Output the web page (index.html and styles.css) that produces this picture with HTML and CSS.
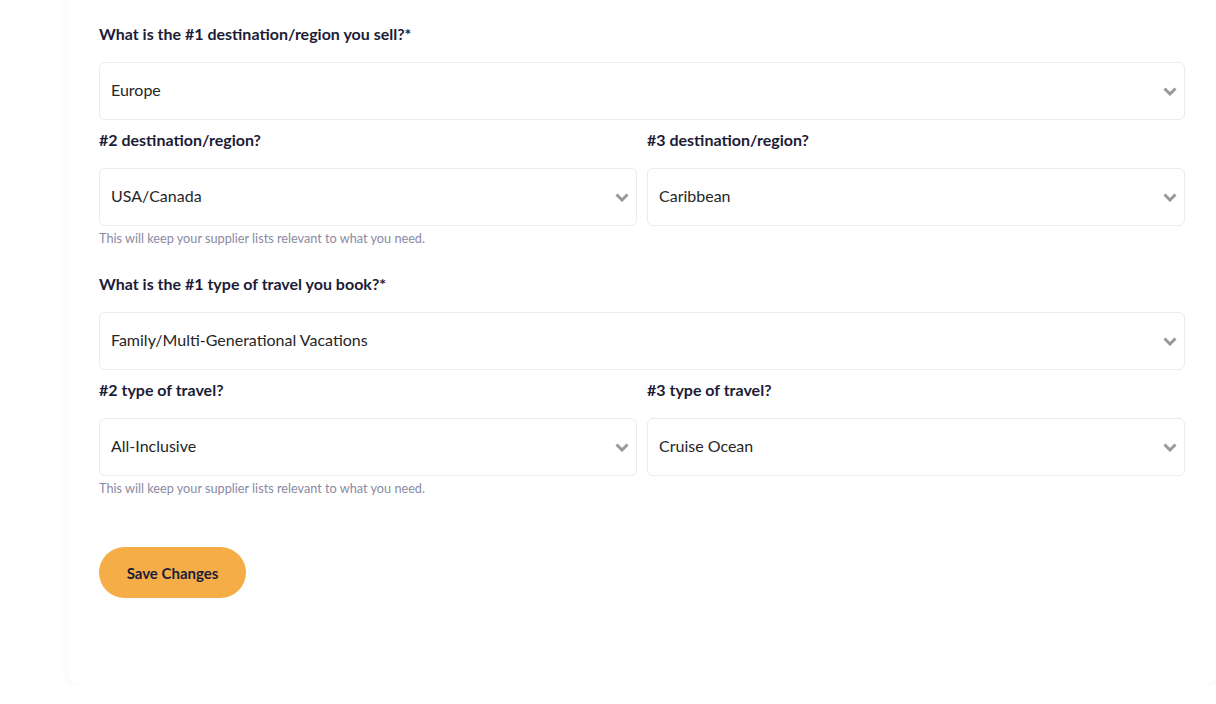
FILE: index.html
```html
<!DOCTYPE html>
<html lang="en">
<head>
    <meta charset="UTF-8">
    <meta name="viewport" content="width=device-width, initial-scale=1.0">
    <title>Profile - Destinations</title>
    <link rel="stylesheet" href="styles.css">
</head>
<body>
    <div class="page">
        <div class="card">
            <!-- Destinations -->
            <div class="field">
                <label class="label">What is the #1 destination/region you sell?*</label>
                <div class="select">
                    <span>Europe</span>
                    <svg class="chevron" viewBox="0 0 14 9"><path d="M1.5 1.5 L7 7 L12.5 1.5"/></svg>
                </div>
            </div>
            <div class="row">
                <div class="field">
                    <label class="label">#2 destination/region?</label>
                    <div class="select">
                        <span>USA/Canada</span>
                        <svg class="chevron" viewBox="0 0 14 9"><path d="M1.5 1.5 L7 7 L12.5 1.5"/></svg>
                    </div>
                </div>
                <div class="field">
                    <label class="label">#3 destination/region?</label>
                    <div class="select">
                        <span>Caribbean</span>
                        <svg class="chevron" viewBox="0 0 14 9"><path d="M1.5 1.5 L7 7 L12.5 1.5"/></svg>
                    </div>
                </div>
            </div>
            <p class="help">This will keep your supplier lists relevant to what you need.</p>

            <!-- Travel types -->
            <div class="field">
                <label class="label">What is the #1 type of travel you book?*</label>
                <div class="select">
                    <span>Family/Multi-Generational Vacations</span>
                    <svg class="chevron" viewBox="0 0 14 9"><path d="M1.5 1.5 L7 7 L12.5 1.5"/></svg>
                </div>
            </div>
            <div class="row">
                <div class="field">
                    <label class="label">#2 type of travel?</label>
                    <div class="select">
                        <span>All-Inclusive</span>
                        <svg class="chevron" viewBox="0 0 14 9"><path d="M1.5 1.5 L7 7 L12.5 1.5"/></svg>
                    </div>
                </div>
                <div class="field">
                    <label class="label">#3 type of travel?</label>
                    <div class="select">
                        <span>Cruise Ocean</span>
                        <svg class="chevron" viewBox="0 0 14 9"><path d="M1.5 1.5 L7 7 L12.5 1.5"/></svg>
                    </div>
                </div>
            </div>
            <p class="help">This will keep your supplier lists relevant to what you need.</p>

            <button class="save">Save Changes</button>
        </div>
    </div>
</body>
</html>
```

FILE: styles.css
```css
body, html {
    margin: 0;
    padding: 0;
    font-family: Lato, "Open Sans", sans-serif;
    background-color: #ffffff;
    overflow: hidden;
}

* {
    box-sizing: border-box;
}

.page {
    padding-left: 67px;
}

.card {
    width: 1150px;
    margin-top: -20px;
    padding: 44px 32px 87px 32px;
    background-color: #ffffff;
    border-radius: 14px;
    box-shadow: 0 2px 10px rgba(0, 0, 0, 0.045);
}

.field {
    display: flex;
    flex-direction: column;
}

.label {
    font-size: 16px;
    font-weight: 700;
    color: #1c1c36;
    margin-bottom: 18px;
    line-height: 20px;
}

.select {
    display: flex;
    align-items: center;
    justify-content: space-between;
    height: 58px;
    padding: 0 7px 0 11px;
    border: 1px solid #e5eded;
    border-radius: 6px;
    background-color: #ffffff;
    font-size: 16px;
    color: #262626;
    margin-bottom: 10px;
}

.select span {
    margin-bottom: 3px;
}

.chevron {
    width: 14px;
    height: 9px;
    margin-top: 1px;
}

.chevron path {
    fill: none;
    stroke: #999999;
    stroke-width: 3;
}

.row {
    display: flex;
    gap: 10px;
}

.row .field {
    flex: 1;
}

.row .select {
    margin-bottom: 5px;
}

.help {
    margin: 0 0 29px;
    font-size: 12.7px;
    line-height: 14px;
    color: #8a8aa3;
}

.save {
    margin-top: 23px;
    width: 147px;
    height: 51px;
    border: none;
    border-radius: 26px;
    background-color: #f5ae47;
    color: #1c1c36;
    font-family: Lato, "Open Sans", sans-serif;
    font-size: 15px;
    font-weight: 700;
    cursor: pointer;
}
```
